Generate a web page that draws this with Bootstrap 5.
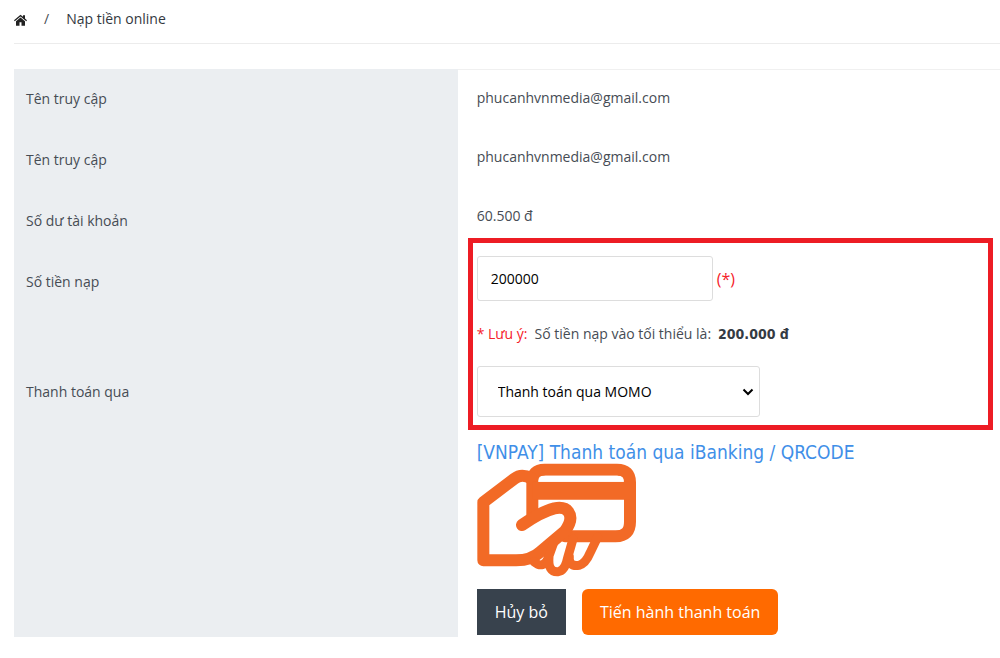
<!DOCTYPE html>
<html lang="vi">
<head>
<meta charset="utf-8">
<meta name="viewport" content="width=device-width, initial-scale=1">
<title>Nạp tiền online</title>
<link href="https://cdn.jsdelivr.net/npm/bootstrap@5.3.0/dist/css/bootstrap.min.css" rel="stylesheet">
<style>
  body { font-family: "Open Sans", "Noto Sans", sans-serif; font-size: 14px; line-height: 20px; color: #464c54; }
  .page { padding-left: 14px; }
  .crumbs { height: 44px; padding-bottom: 5px; border-bottom: 1px solid #ececec; }
  .crumbs .breadcrumb-item + .breadcrumb-item { padding-left: 17px; }
  .crumbs .breadcrumb-item + .breadcrumb-item::before { padding-right: 17px; color: #464c54; }
  .crumbs .breadcrumb-item.active { color: #33383e; }
  .topup { margin-top: 25px; }
  .labels { flex: 0 0 45%; background: #ebeef1; padding: 20px 12px 0; }
  .labels > * { min-height: 61px; }
  .labels .tall { min-height: 110px; }
  .fields { border-top: 1px solid #f0f0f0; padding: 18px 7px 2px 10px; }
  .fields p { margin: 0 9px 39px; }
  .fields p.last { margin-bottom: 12px; }
  .marked { border: 5px solid #ed1c24; padding: 13px 4px 8px; }
  .form-control.amount { width: 236px; height: 45px; padding: 0 13px; font-size: 14px; color: #000; border-color: #ddd; border-radius: 3px; }
  .form-select.method { width: 283px; height: 51px; padding: 0 32px 0 20px; font-size: 14px; color: #000; border-color: #ddd; border-radius: 3px;
    background-image: url("data:image/svg+xml,%3csvg xmlns='http://www.w3.org/2000/svg' viewBox='0 0 12 12'%3e%3cpath d='M1.500 3.500 6 8l4.500-4.500' fill='none' stroke='black' stroke-width='2'/%3e%3c/svg%3e");
    background-size: 12px 12px; background-position: right 5px center; }
  .required { color: #f5222a; }
  .note { margin: 23px 0 22px; gap: 7px; }
  .note strong { color: #343b43; font-family: "DejaVu Sans Condensed", "Noto Sans", sans-serif; }
  .vnpay { color: #3f8fe8; font-family: "DejaVu Sans Condensed", "Noto Sans", sans-serif; font-size: 19px; line-height: 22px; }
  .pay { padding: 11px 9px 0; }
  .pay .btn { height: 46px; padding: 0 18px; border: 0; font-size: 16px; color: #fff; }
  .btn-cancel, .btn-cancel:hover { background: #38424d; border-radius: 0; }
  .btn-go, .btn-go:hover { background: #ff6a00; border-radius: 6px; }
</style>
</head>
<body>
<div class="page">
  <nav class="crumbs d-flex align-items-center" aria-label="breadcrumb">
    <ol class="breadcrumb mb-0">
      <li class="breadcrumb-item"><a href="#" aria-label="Trang chủ"><svg width="13" height="12" viewBox="0 0 26 23" fill="#222" aria-hidden="true"><path d="M13 1 0 12l1.500 2L13 4.500 24.500 14l1.500-2-4-3.500V2h-4v3.200z"/><path d="M13 6.500 4 14v9h7v-7h4v7h7v-9z"/></svg></a></li>
      <li class="breadcrumb-item active" aria-current="page">Nạp tiền online</li>
    </ol>
  </nav>

  <form class="topup d-flex">
    <div class="labels d-flex flex-column">
      <div>Tên truy cập</div>
      <div>Tên truy cập</div>
      <div>Số dư tài khoản</div>
      <label for="amount" class="tall">Số tiền nạp</label>
      <label for="method">Thanh toán qua</label>
    </div>
    <div class="fields flex-grow-1">
      <p>phucanhvnmedia@gmail.com</p>
      <p>phucanhvnmedia@gmail.com</p>
      <p class="last">60.500 đ</p>
      <div class="marked">
        <div class="d-flex align-items-center gap-1">
          <input id="amount" class="form-control amount" type="text" value="200000">
          <span class="required fs-6">(*)</span>
        </div>
        <div class="note d-flex"><span class="required">* Lưu ý:</span> <span>Số tiền nạp vào tối thiểu là:</span> <strong>200.000 đ</strong></div>
        <select id="method" class="form-select method"><option>Thanh toán qua MOMO</option></select>
      </div>
      <div class="pay">
        <a href="#" class="vnpay d-block text-decoration-none">[VNPAY] Thanh toán qua iBanking / QRCODE</a>
        <svg class="d-block" width="160" height="114" viewBox="36 22 480 342" aria-hidden="true">
          <g fill="none" stroke="#f26a26" stroke-linejoin="round" stroke-linecap="round">
            <path stroke-width="36" d="M202 180V78Q202 42 238 42H456Q495 42 495 80V198Q495 242 452 242H300"/>
            <path stroke-width="36" d="M198 68Q170 52 148 69L55 140V314H150Q198 315 228 287L300 226Q326 190 310 168Q298 152 268 158Q228 168 171 208"/>
            <path stroke-width="27" d="M207 318Q236 342 250 306L268 256M252 304Q248 350 279 348Q300 346 308 306L324 250M313 302Q310 334 342 329Q362 324 376 290L398 244"/>
          </g>
          <path fill="#f26a26" d="M202 78H495V132H202z"/>
          <path fill="#fff" d="M220 78Q222 60 242 60H456Q475 60 476 78z"/>
        </svg>
        <div class="d-flex gap-3 mt-2 pt-1">
          <button type="button" class="btn btn-cancel">Hủy bỏ</button>
          <button type="submit" class="btn btn-go">Tiến hành thanh toán</button>
        </div>
      </div>
    </div>
  </form>
</div>
<script src="https://cdn.jsdelivr.net/npm/bootstrap@5.3.0/dist/js/bootstrap.bundle.min.js"></script>
</body>
</html>
